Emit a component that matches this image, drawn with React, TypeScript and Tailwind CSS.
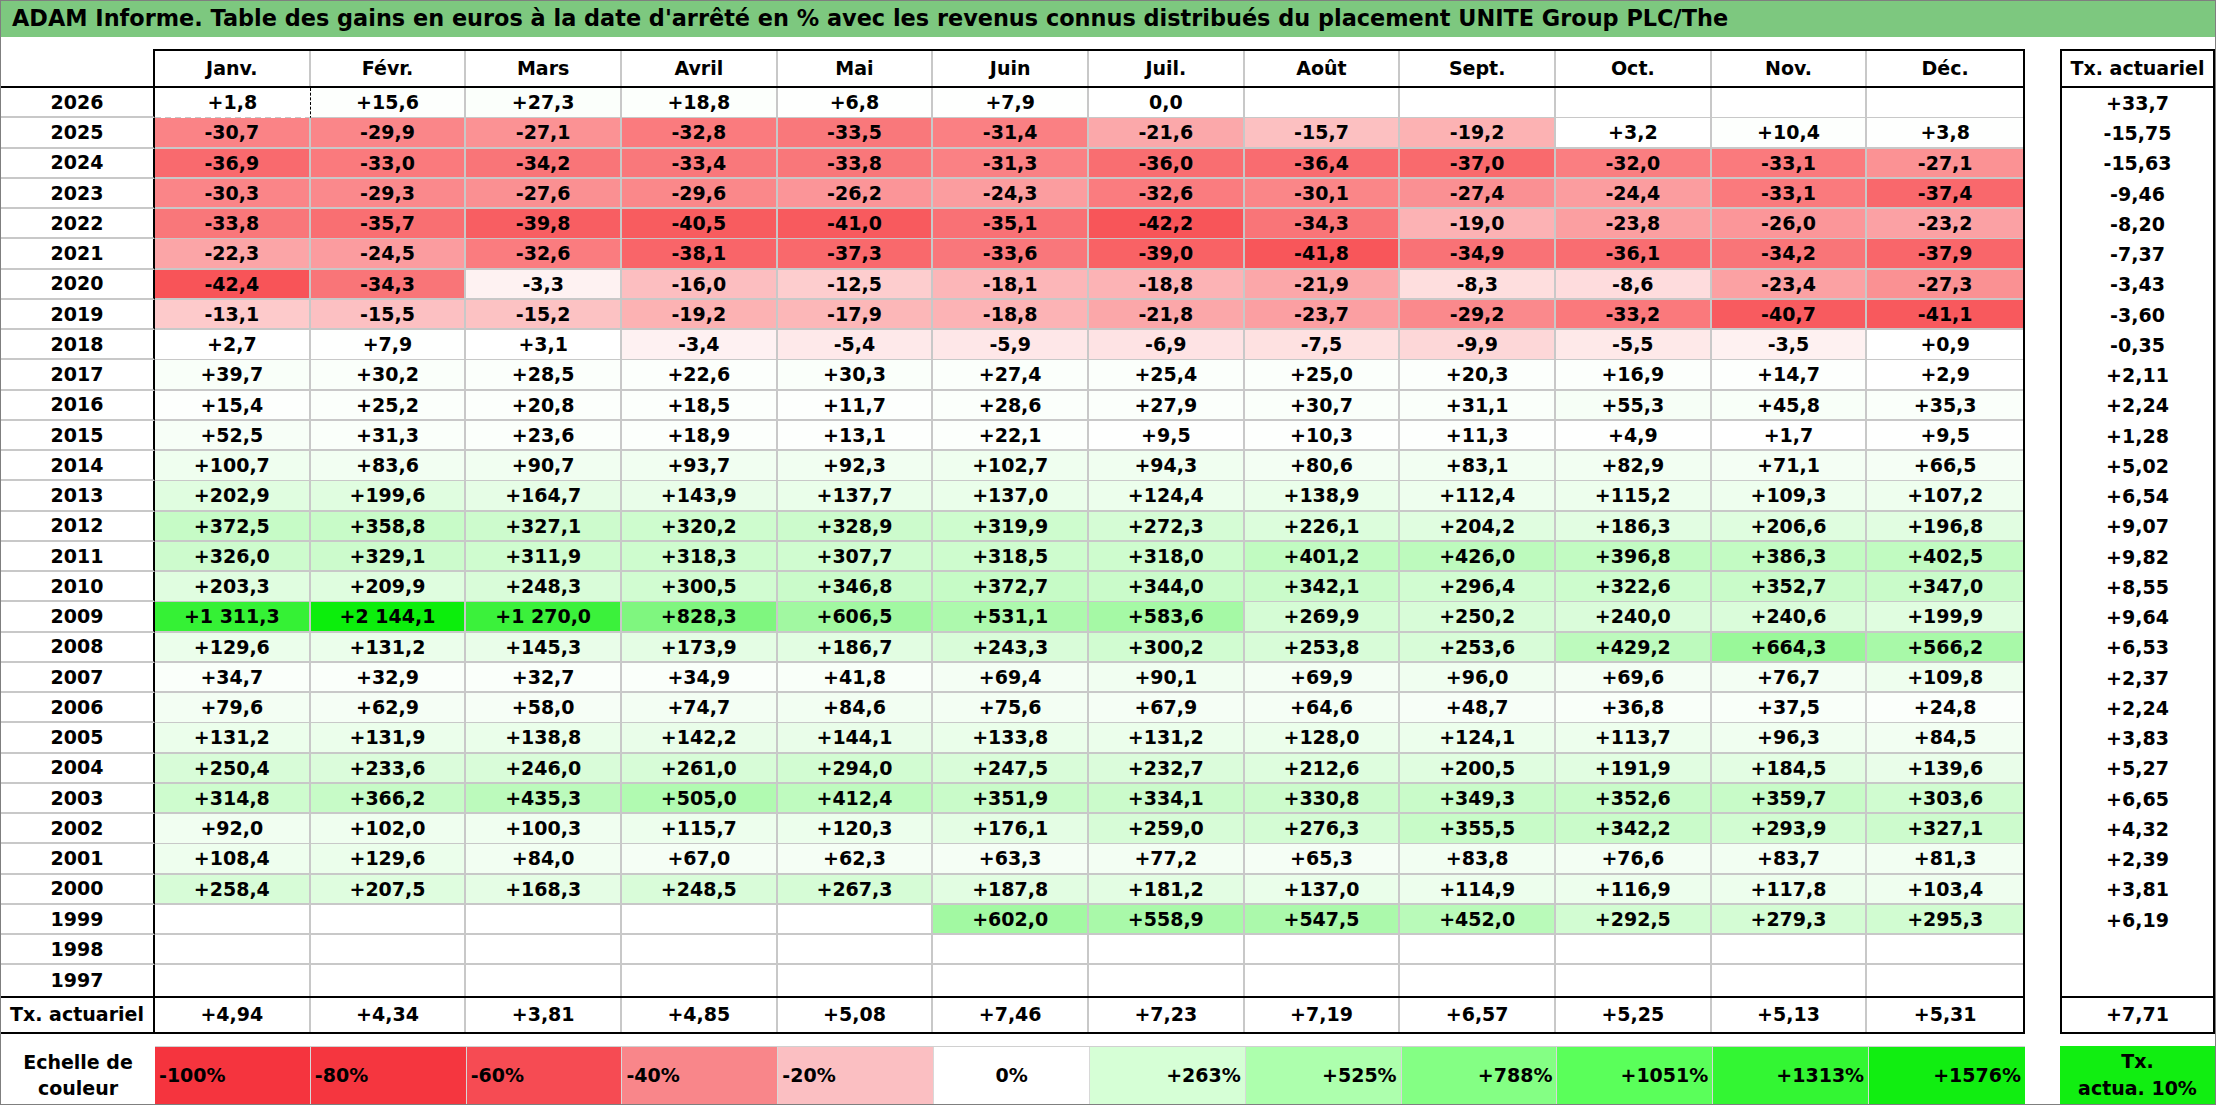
import React from "react";

const months = ["Janv.", "Févr.", "Mars", "Avril", "Mai", "Juin", "Juil.", "Août", "Sept.", "Oct.", "Nov.", "Déc."];

type Row = [string, string[], string];

const rows: Row[] = [
  ["2026", ["+1,8", "+15,6", "+27,3", "+18,8", "+6,8", "+7,9", "0,0", "", "", "", "", ""], "+33,7"],
  ["2025", ["-30,7", "-29,9", "-27,1", "-32,8", "-33,5", "-31,4", "-21,6", "-15,7", "-19,2", "+3,2", "+10,4", "+3,8"], "-15,75"],
  ["2024", ["-36,9", "-33,0", "-34,2", "-33,4", "-33,8", "-31,3", "-36,0", "-36,4", "-37,0", "-32,0", "-33,1", "-27,1"], "-15,63"],
  ["2023", ["-30,3", "-29,3", "-27,6", "-29,6", "-26,2", "-24,3", "-32,6", "-30,1", "-27,4", "-24,4", "-33,1", "-37,4"], "-9,46"],
  ["2022", ["-33,8", "-35,7", "-39,8", "-40,5", "-41,0", "-35,1", "-42,2", "-34,3", "-19,0", "-23,8", "-26,0", "-23,2"], "-8,20"],
  ["2021", ["-22,3", "-24,5", "-32,6", "-38,1", "-37,3", "-33,6", "-39,0", "-41,8", "-34,9", "-36,1", "-34,2", "-37,9"], "-7,37"],
  ["2020", ["-42,4", "-34,3", "-3,3", "-16,0", "-12,5", "-18,1", "-18,8", "-21,9", "-8,3", "-8,6", "-23,4", "-27,3"], "-3,43"],
  ["2019", ["-13,1", "-15,5", "-15,2", "-19,2", "-17,9", "-18,8", "-21,8", "-23,7", "-29,2", "-33,2", "-40,7", "-41,1"], "-3,60"],
  ["2018", ["+2,7", "+7,9", "+3,1", "-3,4", "-5,4", "-5,9", "-6,9", "-7,5", "-9,9", "-5,5", "-3,5", "+0,9"], "-0,35"],
  ["2017", ["+39,7", "+30,2", "+28,5", "+22,6", "+30,3", "+27,4", "+25,4", "+25,0", "+20,3", "+16,9", "+14,7", "+2,9"], "+2,11"],
  ["2016", ["+15,4", "+25,2", "+20,8", "+18,5", "+11,7", "+28,6", "+27,9", "+30,7", "+31,1", "+55,3", "+45,8", "+35,3"], "+2,24"],
  ["2015", ["+52,5", "+31,3", "+23,6", "+18,9", "+13,1", "+22,1", "+9,5", "+10,3", "+11,3", "+4,9", "+1,7", "+9,5"], "+1,28"],
  ["2014", ["+100,7", "+83,6", "+90,7", "+93,7", "+92,3", "+102,7", "+94,3", "+80,6", "+83,1", "+82,9", "+71,1", "+66,5"], "+5,02"],
  ["2013", ["+202,9", "+199,6", "+164,7", "+143,9", "+137,7", "+137,0", "+124,4", "+138,9", "+112,4", "+115,2", "+109,3", "+107,2"], "+6,54"],
  ["2012", ["+372,5", "+358,8", "+327,1", "+320,2", "+328,9", "+319,9", "+272,3", "+226,1", "+204,2", "+186,3", "+206,6", "+196,8"], "+9,07"],
  ["2011", ["+326,0", "+329,1", "+311,9", "+318,3", "+307,7", "+318,5", "+318,0", "+401,2", "+426,0", "+396,8", "+386,3", "+402,5"], "+9,82"],
  ["2010", ["+203,3", "+209,9", "+248,3", "+300,5", "+346,8", "+372,7", "+344,0", "+342,1", "+296,4", "+322,6", "+352,7", "+347,0"], "+8,55"],
  ["2009", ["+1 311,3", "+2 144,1", "+1 270,0", "+828,3", "+606,5", "+531,1", "+583,6", "+269,9", "+250,2", "+240,0", "+240,6", "+199,9"], "+9,64"],
  ["2008", ["+129,6", "+131,2", "+145,3", "+173,9", "+186,7", "+243,3", "+300,2", "+253,8", "+253,6", "+429,2", "+664,3", "+566,2"], "+6,53"],
  ["2007", ["+34,7", "+32,9", "+32,7", "+34,9", "+41,8", "+69,4", "+90,1", "+69,9", "+96,0", "+69,6", "+76,7", "+109,8"], "+2,37"],
  ["2006", ["+79,6", "+62,9", "+58,0", "+74,7", "+84,6", "+75,6", "+67,9", "+64,6", "+48,7", "+36,8", "+37,5", "+24,8"], "+2,24"],
  ["2005", ["+131,2", "+131,9", "+138,8", "+142,2", "+144,1", "+133,8", "+131,2", "+128,0", "+124,1", "+113,7", "+96,3", "+84,5"], "+3,83"],
  ["2004", ["+250,4", "+233,6", "+246,0", "+261,0", "+294,0", "+247,5", "+232,7", "+212,6", "+200,5", "+191,9", "+184,5", "+139,6"], "+5,27"],
  ["2003", ["+314,8", "+366,2", "+435,3", "+505,0", "+412,4", "+351,9", "+334,1", "+330,8", "+349,3", "+352,6", "+359,7", "+303,6"], "+6,65"],
  ["2002", ["+92,0", "+102,0", "+100,3", "+115,7", "+120,3", "+176,1", "+259,0", "+276,3", "+355,5", "+342,2", "+293,9", "+327,1"], "+4,32"],
  ["2001", ["+108,4", "+129,6", "+84,0", "+67,0", "+62,3", "+63,3", "+77,2", "+65,3", "+83,8", "+76,6", "+83,7", "+81,3"], "+2,39"],
  ["2000", ["+258,4", "+207,5", "+168,3", "+248,5", "+267,3", "+187,8", "+181,2", "+137,0", "+114,9", "+116,9", "+117,8", "+103,4"], "+3,81"],
  ["1999", ["", "", "", "", "", "+602,0", "+558,9", "+547,5", "+452,0", "+292,5", "+279,3", "+295,3"], "+6,19"],
  ["1998", ["", "", "", "", "", "", "", "", "", "", "", ""], ""],
  ["1997", ["", "", "", "", "", "", "", "", "", "", "", ""], ""],
];

const totals = ["+4,94", "+4,34", "+3,81", "+4,85", "+5,08", "+7,46", "+7,23", "+7,19", "+6,57", "+5,25", "+5,13", "+5,31"];

const legend: { label: string; bg: string; align: "left" | "center" | "right" }[] = [
  { label: "-100%", bg: "bg-[#f5343e]", align: "left" },
  { label: "-80%", bg: "bg-[#f5363f]", align: "left" },
  { label: "-60%", bg: "bg-[#f64b53]", align: "left" },
  { label: "-40%", bg: "bg-[#f9868a]", align: "left" },
  { label: "-20%", bg: "bg-[#fbbfc2]", align: "left" },
  { label: "0%", bg: "bg-white", align: "center" },
  { label: "+263%", bg: "bg-[#d6ffd6]", align: "right" },
  { label: "+525%", bg: "bg-[#adffad]", align: "right" },
  { label: "+788%", bg: "bg-[#84ff84]", align: "right" },
  { label: "+1051%", bg: "bg-[#5aff5a]", align: "right" },
  { label: "+1313%", bg: "bg-[#33f633]", align: "right" },
  { label: "+1576%", bg: "bg-[#11ee11]", align: "right" },
];

function parse(s: string): number | null {
  if (!s) return null;
  return parseFloat(s.replace(/\s/g, "").replace(",", "."));
}

function cellColor(s: string): string | undefined {
  const v = parse(s);
  if (v === null) return undefined;
  if (v >= 0) {
    const t = Math.min(v / 1576, 1);
    const rb = Math.round(255 - 243 * t);
    const g = Math.round(255 - 17 * t);
    return `rgb(${rb},${g},${rb})`;
  }
  const t = Math.min(-v / 42.4, 1);
  return `rgb(${Math.round(255 - 7 * t)},${Math.round(255 - 171 * t)},${Math.round(255 - 167 * t)})`;
}

function DataRow({ row, last }: { row: Row; last: boolean }) {
  const [year, vals, tx] = row;
  const rowBorder = last ? "" : "border-b-2 border-b-[#c8c8c8]";
  return (
    <div className="flex h-[30.25px]">
      <div className={`w-[154px] shrink-0 flex items-center justify-center border-r-2 border-r-black ${rowBorder}`}>{year}</div>
      <div className="w-[1870px] shrink-0 grid grid-cols-12 border-r-2 border-r-black">
        {vals.map((v, i) => {
          const dashed = year === "2026" && i === 0;
          const right =
            i === 11
              ? ""
              : dashed
              ? "border-r border-r-black border-dashed"
              : "border-r-2 border-r-[#c8c8c8]";
          return (
            <div
              key={i}
              className={`flex items-center justify-center ${right} ${rowBorder}`}
              style={{ backgroundColor: cellColor(v) }}
            >
              {v}
            </div>
          );
        })}
      </div>
      <div className="w-[35px] shrink-0" />
      <div className="w-[155px] shrink-0 flex items-center justify-center border-x-2 border-black">{tx}</div>
    </div>
  );
}

export default function App() {
  return (
    <div className="w-[2216px] h-[1105px] bg-white border border-[#7f7f7f] overflow-hidden font-['DejaVu_Sans',sans-serif] font-bold text-[19px] text-black">
      <div className="h-[36px] bg-[#7dc87f] flex items-center pl-[11px] text-[22.4px] whitespace-nowrap">
        ADAM Informe. Table des gains en euros à la date d'arrêté en % avec les revenus connus distribués du placement UNITE Group PLC/The
      </div>

      <div className="mt-[12px]">
        <div className="flex h-[39px]">
          <div className="w-[154px] shrink-0 border-r-2 border-b-2 border-black" />
          <div className="w-[1870px] shrink-0 grid grid-cols-12 border-2 border-l-0 border-black">
            {months.map((m, i) => (
              <div key={m} className={`flex items-center justify-center ${i === 11 ? "" : "border-r-2 border-r-[#c8c8c8]"}`}>
                {m}
              </div>
            ))}
          </div>
          <div className="w-[35px] shrink-0" />
          <div className="w-[155px] shrink-0 flex items-center justify-center border-2 border-black whitespace-nowrap">
            Tx. actuariel
          </div>
        </div>

        {rows.map((r, i) => (
          <DataRow key={r[0]} row={r} last={i === rows.length - 1} />
        ))}

        <div className="flex h-[38px]">
          <div className="w-[154px] shrink-0 flex items-center justify-center border-y-2 border-r-2 border-black whitespace-nowrap">
            Tx. actuariel
          </div>
          <div className="w-[1870px] shrink-0 grid grid-cols-12 border-y-2 border-r-2 border-black">
            {totals.map((t, i) => (
              <div key={i} className={`flex items-center justify-center ${i === 11 ? "" : "border-r-2 border-r-[#c8c8c8]"}`}>
                {t}
              </div>
            ))}
          </div>
          <div className="w-[35px] shrink-0" />
          <div className="w-[155px] shrink-0 flex items-center justify-center border-2 border-black">+7,71</div>
        </div>
      </div>

      <div className="mt-[12px] flex h-[58px]">
        <div className="w-[154px] shrink-0 flex flex-col items-center justify-center leading-[26px] text-center">
          <span>Echelle de</span>
          <span>couleur</span>
        </div>
        <div className="w-[1870px] shrink-0 grid grid-cols-12 border-t border-[#d0d0d0]">
          {legend.map((l, i) => (
            <div
              key={l.label}
              className={`${l.bg} flex items-center ${
                l.align === "left" ? "justify-start pl-[4px]" : l.align === "center" ? "justify-center" : "justify-end pr-[4px]"
              } ${i === 11 ? "" : "border-r border-r-[#d8d8d8]"}`}
            >
              {l.label}
            </div>
          ))}
        </div>
        <div className="w-[35px] shrink-0" />
        <div className="w-[155px] shrink-0 bg-[#11ee11] flex flex-col items-center justify-center leading-[27px] text-center">
          <span>Tx.</span>
          <span>actua. 10%</span>
        </div>
      </div>
    </div>
  );
}
